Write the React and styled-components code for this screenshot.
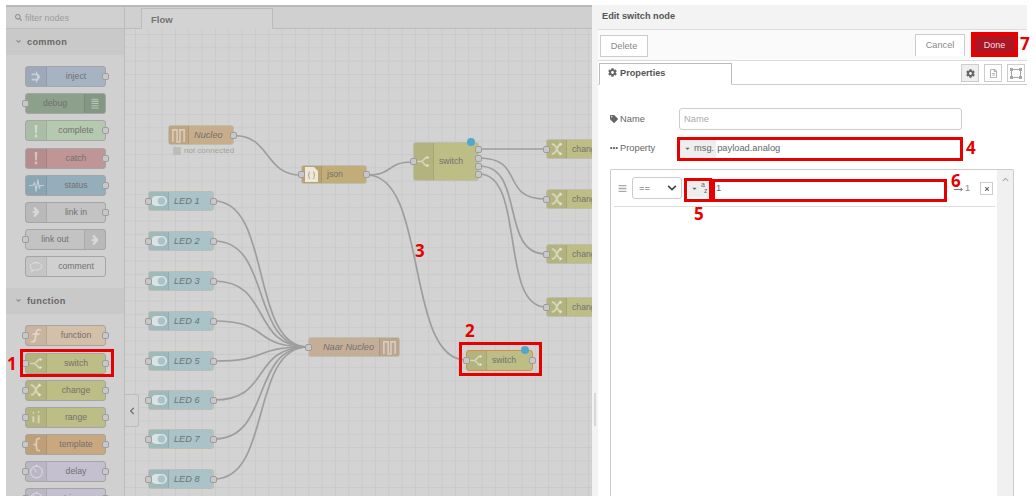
import React from 'react';
import styled, { createGlobalStyle } from 'styled-components';
import { FaCog, FaTag, FaEllipsisH, FaBars, FaSearch, FaCaretDown, FaTimes, FaChevronLeft, FaRegFileAlt, FaChevronUp, FaChevronDown, FaAngleDown } from 'react-icons/fa';

const Global = createGlobalStyle`
  html, body { margin: 0; padding: 0; background: #fff; overflow: hidden; }
  body { font-family: "Liberation Sans", Arial, sans-serif; }
  * { box-sizing: border-box; }
`;

const Page = styled.div`
  position: relative;
  width: 1036px;
  height: 504px;
  background: #fff;
  overflow: hidden;
`;

const Frame = styled.div`
  display: flex;
  margin: 5px 0 0 6px;
  width: 1021px;
  height: 491px;
`;

/* ---------- palette ---------- */
const Palette = styled.aside`
  flex: 0 0 119px;
  background: #d0d0d0;
  border-top: 2px solid #b9b9b9;
  border-right: 1px solid #bcbcbc;
  overflow: hidden;
`;
const Filter = styled.div`
  display: flex;
  align-items: center;
  gap: 3px;
  height: 22px;
  padding-left: 9px;
  color: #9c9c9c;
  font-size: 9px;
  border-bottom: 1px solid #bcbcbc;
  svg { font-size: 7px; color: #8f8f8f; }
`;
const Category = styled.div`
  display: flex;
  align-items: center;
  gap: 5px;
  height: 26px;
  padding-left: 9px;
  padding-bottom: 1px;
  background: #c9c9c9;
  color: #6a6a6a;
  font-size: 9.2px;
  font-weight: bold;
  letter-spacing: .3px;
  svg { font-size: 7px; color: #888; }
`;
const PaletteList = styled.div`
  display: flex;
  flex-direction: column;
  gap: 6.2px;
  padding: 11px 0 11px 19px;
`;
const NodeBox = styled.div`
  position: relative;
  display: flex;
  flex-direction: ${p => (p.$iconRight ? 'row-reverse' : 'row')};
  align-items: stretch;
  width: ${p => p.$w || 81}px;
  height: ${p => p.$h || 21}px;
  background: ${p => p.$color};
  border: 1px solid ${p => p.$border || '#a5a5a5'};
  border-radius: 3px;
  color: #717171;
  font-size: 8.7px;
`;
const IconCell = styled.div`
  flex: 0 0 ${p => p.$w || 20}px;
  display: flex;
  align-items: center;
  justify-content: center;
  background: rgba(0, 0, 0, .05);
  border-${p => (p.$right ? 'left' : 'right')}: 1px solid rgba(0, 0, 0, .08);
  svg { display: block; }
`;
const NodeLabel = styled.div`
  flex: 1;
  display: flex;
  align-items: center;
  justify-content: ${p => p.$align || 'center'};
  white-space: nowrap;
  font-style: ${p => (p.$italic ? 'italic' : 'normal')};
  font-size: ${p => (p.$italic ? 9.2 : 8.7)}px;
  padding: 0 5px 1px;
`;
const Port = styled.span`
  position: absolute;
  width: 7px;
  height: 7px;
  top: ${p => (p.$top != null ? `${p.$top}px` : 'calc(50% - 3.5px)')};
  ${p => (p.$side === 'left' ? 'left: -4px;' : 'right: -4px;')}
  background: #c8c8c8;
  border: 1px solid #9d9d9d;
  border-radius: 2px;
`;

/* ---------- canvas ---------- */
const Workspace = styled.main`
  flex: 0 0 467px;
  display: flex;
  flex-direction: column;
  background: #d3d3d3;
  border-top: 2px solid #b9b9b9;
  overflow: hidden;
`;
const TabBar = styled.div`
  flex: 0 0 22px;
  display: flex;
  align-items: flex-end;
  padding-left: 16px;
  background: #d0d0d0;
  border-bottom: 1px solid #bcbcbc;
`;
const FlowTab = styled.div`
  display: flex;
  align-items: center;
  width: 132px;
  height: 21px;
  margin-bottom: -1px;
  padding-left: 9px;
  background: #d3d3d3;
  border: 1px solid #bcbcbc;
  border-bottom: none;
  color: #757575;
  font-size: 9.5px;
  font-weight: bold;
`;
const Canvas = styled.div`
  position: relative;
  flex: 1;
  overflow: hidden;
  background-color: #d3d3d3;
  background-image:
    linear-gradient(#cacaca 1px, transparent 1px),
    linear-gradient(90deg, #cacaca 1px, transparent 1px);
  background-size: 13.33px 13.33px;
  background-position: 10px 5px;
`;
const Wires = styled.svg`
  position: absolute;
  left: 0;
  top: 0;
  path { fill: none; stroke: #9e9e9e; stroke-width: 1.7; }
`;
const Placed = styled.div`
  position: absolute;
  left: ${p => p.$x - CX}px;
  top: ${p => p.$y - CY}px;
`;
const StatusLine = styled.div`
  display: flex;
  align-items: center;
  gap: 3px;
  margin: 1px 0 0 5px;
  color: #a2a2a2;
  font-size: 8px;
  white-space: nowrap;
`;
const StatusDot = styled.span`
  width: 8px;
  height: 8px;
  background: #bdbdbd;
  border-radius: 1px;
`;
const ChangedDot = styled.span`
  position: absolute;
  right: ${p => p.$r}px;
  top: -5px;
  width: 8px;
  height: 8px;
  border-radius: 50%;
  background: #4fa9cd;
`;
const CollapseTab = styled.div`
  position: absolute;
  left: -1px;
  top: 365px;
  width: 15px;
  height: 33px;
  display: flex;
  align-items: center;
  justify-content: center;
  background: #d2d2d2;
  border: 1px solid #bcbcbc;
  border-left: 1px solid #fff;
  border-radius: 0 3px 3px 0;
  color: #6b6b6b;
  svg { font-size: 8px; }
`;

/* ---------- edit tray ---------- */
const Tray = styled.section`
  flex: 1;
  display: flex;
  flex-direction: column;
  background: #fff;
  border-left: 6px solid #f3f3f3;
  position: relative;
  min-width: 0;
`;
const Sash = styled.span`
  position: absolute;
  left: -4px;
  top: 388px;
  width: 2px;
  height: 33px;
  background: #d8d8d8;
`;
const TrayTitle = styled.div`
  flex: 0 0 25px;
  display: flex;
  align-items: center;
  padding: 0 0 2px 4px;
  background: #f3f3f3;
  border-bottom: 1px solid #ddd;
  color: #555;
  font-size: 9.2px;
  font-weight: bold;
`;
const TrayToolbar = styled.div`
  flex: 0 0 31px;
  display: flex;
  align-items: flex-start;
  justify-content: space-between;
  padding: 4px 13px 0 2px;
  background: #fafafa;
  border-bottom: 1px solid #ddd;
`;
const ToolButton = styled.div`
  display: flex;
  align-items: center;
  justify-content: center;
  width: ${p => p.$w}px;
  height: 22px;
  margin-top: ${p => p.$mt || 0}px;
  padding-bottom: 1px;
  background: #fff;
  border: 1px solid #ccc;
  border-bottom: ${p => (p.$open ? 'none' : '1px solid #ccc')};
  color: #888;
  font-size: 9.2px;
`;
const ToolRight = styled.div`
  display: flex;
  gap: 10px;
`;
const DoneButton = styled.div`
  display: flex;
  align-items: center;
  justify-content: center;
  width: 39px;
  height: 19px;
  margin: 1px 0 0;
  background: #ad1625;
  color: #f2dfe1;
  font-size: 9px;
`;
const TabRow = styled.div`
  flex: 0 0 24px;
  display: flex;
  align-items: flex-end;
  justify-content: space-between;
  padding: 0 2px 0 1px;
  border-bottom: 1px solid #ccc;
`;
const PropTab = styled.div`
  display: flex;
  align-items: center;
  gap: 3px;
  width: 133px;
  height: 22px;
  margin-bottom: -1px;
  padding: 0 0 3px 8px;
  background: #fff;
  border: 1px solid #bbb;
  border-bottom: 1px solid #fff;
  color: #555;
  font-size: 9.2px;
  font-weight: bold;
  svg { font-size: 9px; color: #666; }
`;
const TabIcons = styled.div`
  display: flex;
  gap: 5px;
  margin-bottom: 2px;
`;
const TabIcon = styled.div`
  display: flex;
  align-items: center;
  justify-content: center;
  width: 18px;
  height: 18px;
  background: ${p => (p.$active ? '#efefef' : '#fff')};
  border: 1px solid #ccc;
  color: ${p => (p.$active ? '#666' : '#a5a5a5')};
  svg { font-size: 9px; }
`;
const Form = styled.div`
  flex: 1;
  display: flex;
  flex-direction: column;
  min-height: 0;
  padding: 23px 13px 0 12px;
`;
const FormRow = styled.div`
  display: flex;
  align-items: center;
  height: 22px;
  margin-bottom: ${p => p.$mb || 0}px;
`;
const FieldLabel = styled.label`
  display: flex;
  align-items: center;
  gap: 2px;
  flex: 0 0 69px;
  padding-bottom: 1px;
  color: #666;
  font-size: 9.3px;
  svg { font-size: 8px; color: #666; }
`;
const TextField = styled.input`
  width: 283px;
  height: 22px;
  padding: 0 4px;
  border: 1px solid #ccc;
  border-radius: 3px;
  outline: none;
  font: 9.3px "Liberation Sans", Arial, sans-serif;
  color: #555;
  &::placeholder { color: #aaa; }
`;
const TypedField = styled.div`
  display: flex;
  align-items: center;
  width: 280px;
  height: 19px;
  margin-left: 1px;
  color: #666;
  font-size: 9.3px;
`;
const TypeTag = styled.div`
  display: flex;
  align-items: center;
  gap: 3px;
  align-self: stretch;
  padding: 0 2px 0 4px;
  background: #eee;
  color: #666;
  font-size: 9.3px;
  svg { font-size: 7px; }
`;
const TypedValue = styled.span`
  padding-left: 1px;
`;
const RuleList = styled.div`
  flex: 1;
  display: flex;
  min-height: 0;
  margin-top: 10px;
  border: 1.5px solid #ccc;
  border-bottom: none;
  border-radius: 2px 2px 0 0;
`;
const RuleBody = styled.div`
  flex: 1;
  padding: 0 2px 0 3px;
`;
const RuleRow = styled.div`
  display: flex;
  align-items: center;
  height: 37px;
  padding: 2px 0 2px 4px;
  border-bottom: 1px solid #ddd;
`;
const Handle = styled.span`
  flex: 0 0 14px;
  display: flex;
  color: #aaa;
  svg { font-size: 9px; }
`;
const OpSelect = styled.div`
  display: flex;
  align-items: center;
  justify-content: space-between;
  width: 50px;
  height: 22px;
  padding: 0 4px 0 6px;
  background: #fff;
  border: 1px solid #ccc;
  border-radius: 3px;
  color: #555;
  font-size: 9.3px;
  svg { font-size: 10px; color: #444; }
`;
const AzButton = styled.div`
  display: flex;
  align-items: center;
  gap: 3px;
  width: 21px;
  height: 18px;
  margin-left: 6px;
  padding-left: 3px;
  background: #eee;
  color: #666;
  svg { font-size: 7px; }
`;
const AzLetters = styled.span`
  display: flex;
  flex-direction: column;
  font-size: 7px;
  line-height: 6.500px;
  span:last-child { margin-left: 3px; }
`;
const RuleValue = styled.input`
  width: 229px;
  height: 18px;
  margin-left: 6px;
  padding: 0 0 0 1px;
  border: none;
  outline: none;
  color: #666;
  font: 9.3px "Liberation Sans", Arial, sans-serif;
`;
const OutputTag = styled.div`
  display: flex;
  align-items: center;
  gap: 2px;
  width: 20px;
  margin-left: 10px;
  color: #888;
  font-size: 9.3px;
  svg { margin-top: 3px; flex: none; }
`;
const DeleteRule = styled.div`
  display: flex;
  align-items: center;
  justify-content: center;
  width: 13px;
  height: 13px;
  margin-left: 6px;
  margin-top: 1px;
  border: 1px solid #ccc;
  color: #666;
  svg { font-size: 6px; }
`;
const Scrollbar = styled.div`
  flex: 0 0 16px;
  display: flex;
  justify-content: center;
  padding-top: 6px;
  background: #f0f0f0;
  color: #aaa;
  svg { font-size: 7px; }
`;

/* ---------- annotations ---------- */
const Mark = styled.div`
  position: absolute;
  left: ${p => p.$x}px;
  top: ${p => p.$y}px;
  width: ${p => p.$w}px;
  height: ${p => p.$h}px;
  border: ${p => p.$b || 3}px solid #e60000;
  pointer-events: none;
`;
const Num = styled.div`
  position: absolute;
  left: ${p => p.$x}px;
  top: ${p => p.$y}px;
  color: #e60000;
  font: bold 17px/20px "Open Sans", sans-serif;
`;

/* ---------- icons ---------- */
const W = 'rgba(255,255,255,.45)';
const Glyph = ({ size = 14, children, vb = '0 0 16 16' }) => (
  <svg width={size} height={size} viewBox={vb} fill="none" stroke={W} strokeWidth="1.6" strokeLinecap="round" strokeLinejoin="round">{children}</svg>
);
const icons = {
  wave: <Glyph size={15}><path strokeLinecap="butt" strokeLinejoin="miter" strokeWidth="1.700" d="M2 15V2h4.500v13h3V2H14v13" /></Glyph>,
  switch: <Glyph size={13}><path strokeWidth="2" d="M1 8h5l5-5h2M6 8l5 5h2" /><path fill={W} stroke="none" d="M12 .8 15.500 3 12 5.200zM12 10.800l3.500 2.200-3.500 2.200z" /></Glyph>,
  change: <Glyph size={14}><path d="M3 2.500c5 0 5 11 9 11M3 13.500c5 0 5-11 9-11" strokeWidth="2.200" /><path fill={W} stroke="none" d="M11 0l3.500 2.500L11 5zM11 11l3.500 2.500L11 16z" /></Glyph>,
  inject: <Glyph><path fill={W} stroke="none" d="M3 4h5V1l5 7-5 7v-3H3v-2h6V6H3z" /></Glyph>,
  debug: <Glyph><path strokeLinecap="butt" strokeWidth="1.200" d="M4 2.500h8M4 5h8M4 7.500h8M4 10h8M4 12.500h8" /></Glyph>,
  bang: <Glyph><path fill={W} stroke="none" d="M6.500 1h3l-.5 9.500H7zM6.600 12h2.800v3H6.600z" /></Glyph>,
  status: <Glyph size={15}><path strokeWidth="1.300" d="M0 8h4l2-3 1.500 9L9.500 2l1.500 9 1-3h4" /></Glyph>,
  link: <Glyph><path fill={W} stroke="none" d="M5 2.500h2.500L12 8l-4.500 5.500H5L7 8zM4 7h4v2H4z" /></Glyph>,
  comment: <Glyph><path strokeWidth="1" d="M8 3c3.600 0 6.500 1.900 6.500 4.300S11.600 11.500 8 11.500c-.7 0-1.300 0-1.900-.2L3 13.500l.6-3C2.300 9.700 1.500 8.600 1.500 7.300 1.500 4.900 4.400 3 8 3z" /></Glyph>,
  func: <Glyph size={15}><path strokeWidth="1.800" d="M12 2c-3-1-4 .5-4.300 3L6.500 12c-.4 2.500-1.500 3-3.500 2.500M4.500 6.500h6" /></Glyph>,
  range: <Glyph><path strokeWidth="2.200" strokeLinecap="butt" d="M5 7v7M11 6v9" /><path strokeWidth="2" d="M5 3v.3M11 2v.3" /></Glyph>,
  template: <Glyph size={15}><path strokeWidth="2" d="M11 1.500c-3 0-3 1-3 3v1.500c0 1.500-1 2-2.500 2C7 8 8 8.500 8 10v1.500c0 2 0 3 3 3" /></Glyph>,
  delay: <Glyph size={15}><circle cx="8" cy="8.500" r="6.300" strokeWidth="1.100" /><path strokeWidth="1.100" d="M8 8.500 5 5M8 2.200V1" /></Glyph>,
  toggle: <svg width="16" height="10" viewBox="0 0 16 10"><rect x="0" y="0" width="16" height="10" rx="5" fill="rgba(255,255,255,.6)" /><circle cx="10.500" cy="5" r="3.800" fill="#a9c3c8" /></svg>,
  json: <svg width="13" height="15" viewBox="0 0 13 15"><path fill="rgba(255,255,255,.75)" d="M0 0h9l4 4v11H0z" /><path fill="none" stroke="#b59f6b" strokeWidth="1" d="M5 5c-1.500 0-1 1-1 2s-.2 1-1 1.200c.8.200 1 .5 1 1.300s-.5 2 1 2M8 5c1.500 0 1 1 1 2s.2 1 1 1.200c-.8.200-1 .5-1 1.300s.5 2-1 2" /></svg>,
};

const PN = ({ label, icon, color, left, right, iconRight, border }) => (
  <NodeBox $color={color} $iconRight={iconRight} $border={border}>
    <IconCell $w={21} $right={iconRight}>{icons[icon]}</IconCell>
    <NodeLabel>{label}</NodeLabel>
    {left && <Port $side="left" />}
    {right && <Port $side="right" />}
  </NodeBox>
);

const common = [
  { label: 'inject', icon: 'inject', color: '#a6b3c3', right: 1 },
  { label: 'debug', icon: 'debug', color: '#8ca08c', left: 1, iconRight: 1 },
  { label: 'complete', icon: 'bang', color: '#b4c9ae', right: 1 },
  { label: 'catch', icon: 'bang', color: '#bf9595', right: 1 },
  { label: 'status', icon: 'status', color: '#94aebc', right: 1 },
  { label: 'link in', icon: 'link', color: '#c3c3c3', right: 1 },
  { label: 'link out', icon: 'link', color: '#c3c3c3', left: 1, iconRight: 1 },
  { label: 'comment', icon: 'comment', color: '#d0d0d0' },
];
const fn = [
  { label: 'function', icon: 'func', color: '#d4bfa8', left: 1, right: 1 },
  { label: 'switch', icon: 'switch', color: '#bdbd86', left: 1, right: 1 },
  { label: 'change', icon: 'change', color: '#bdbd86', left: 1, right: 1 },
  { label: 'range', icon: 'range', color: '#bdbd86', left: 1, right: 1 },
  { label: 'template', icon: 'template', color: '#c9a87f', left: 1, right: 1 },
  { label: 'delay', icon: 'delay', color: '#c4c0cf', left: 1, right: 1 },
  { label: 'trigger', icon: 'delay', color: '#c4c0cf', left: 1, right: 1 },
];

/* canvas origin in page coordinates */
const CX = 125;
const CY = 29;
const wire = (x1, y1, x2, y2, k = 0.5) => {
  const dx = Math.max(Math.abs(x2 - x1) * k, 20);
  const a = [x1 - CX, y1 - CY];
  const b = [x2 - CX, y2 - CY];
  return `M${a[0]} ${a[1]}C${a[0] + dx} ${a[1]} ${b[0] - dx} ${b[1]} ${b[0]} ${b[1]}`;
};

const ledY = [191, 231, 271, 311, 351, 390, 429, 469];
const chY = [139, 189, 244, 297];
const wires = [
  wire(234, 135.5, 301, 175, 0.55),
  wire(367, 175, 413, 162, 0.6),
  wire(367, 175, 466, 360, 0.62),
  ...[149, 158, 166, 174].map((y, i) => wire(479, y, 546, chY[i] + 10, 0.7)),
  ...ledY.map(y => wire(214, y + 10, 308, 347, 0.62)),
];

const Flow = ({ x, y, w = 66, h = 20, color, icon, label, italic, iconRight, left, right, ports, border, dot, children }) => (
  <Placed $x={x} $y={y}>
    <NodeBox $w={w} $h={h} $color={color} $iconRight={iconRight} $border={border || '#bdbdb0'}>
      <IconCell $right={iconRight}>{icons[icon]}</IconCell>
      <NodeLabel $italic={italic} $align={iconRight ? 'flex-end' : 'flex-start'}>{label}</NodeLabel>
      {left && <Port $side="left" />}
      {right && <Port $side="right" />}
      {ports && ports.map(t => <Port key={t} $side="right" $top={t} />)}
      {dot != null && <ChangedDot $r={dot} />}
    </NodeBox>
    {children}
  </Placed>
);

const FrameIcon = () => (
  <svg width="12" height="11" viewBox="0 0 12 11" fill="none" stroke="#a5a5a5" strokeWidth="1">
    <rect x="1.500" y="1.500" width="9" height="8" />
    <rect x="0" y="0" width="3" height="3" fill="#a5a5a5" stroke="none" />
    <rect x="9" y="0" width="3" height="3" fill="#a5a5a5" stroke="none" />
    <rect x="0" y="8" width="3" height="3" fill="#a5a5a5" stroke="none" />
    <rect x="9" y="8" width="3" height="3" fill="#a5a5a5" stroke="none" />
  </svg>
);

export default function App() {
  return (
    <Page>
      <Global />
      <Frame>
        <Palette>
          <Filter><FaSearch /> filter nodes</Filter>
          <Category><FaAngleDown /> common</Category>
          <PaletteList>{common.map(n => <PN key={n.label} {...n} />)}</PaletteList>
          <Category><FaAngleDown /> function</Category>
          <PaletteList>{fn.map(n => <PN key={n.label} {...n} />)}</PaletteList>
        </Palette>

        <Workspace>
          <TabBar><FlowTab>Flow</FlowTab></TabBar>
          <Canvas>
            <Wires width="467" height="470">{wires.map((d, i) => <path key={i} d={d} />)}</Wires>
            <CollapseTab><FaChevronLeft /></CollapseTab>

            <Flow x={168} y={125} color="#c8ad8b" icon="wave" label="Nucleo" italic right>
              <StatusLine><StatusDot /> not connected</StatusLine>
            </Flow>
            {ledY.map((y, i) => (
              <Flow key={y} x={148} y={y} color="#a9c3c8" icon="toggle" label={`LED ${i + 1}`} italic left right />
            ))}
            <Flow x={301} y={165} h={19} color="#c2ad78" icon="json" label="json" left right />
            <Flow x={413} y={142} h={39} color="#bdbd86" icon="switch" label="switch" left ports={[3, 12, 20, 28]} dot={3} />
            {chY.map(y => <Flow key={y} x={546} y={y} color="#bdbd86" icon="change" label="change" left />)}
            <Flow x={308} y={337} w={92} color="#c4ae97" icon="wave" label="Naar Nucleo" italic iconRight left />
            <Flow x={466} y={350} w={67} h={21} color="#bdbd86" icon="switch" label="switch" left right border="#e08a3c" dot={3} />
          </Canvas>
        </Workspace>

        <Tray>
          <Sash />
          <TrayTitle>Edit switch node</TrayTitle>
          <TrayToolbar>
            <ToolButton $w={48} $mt={1}>Delete</ToolButton>
            <ToolRight>
              <ToolButton $w={50} $open>Cancel</ToolButton>
              <DoneButton>Done</DoneButton>
            </ToolRight>
          </TrayToolbar>
          <TabRow>
            <PropTab><FaCog /> Properties</PropTab>
            <TabIcons>
              <TabIcon $active><FaCog /></TabIcon>
              <TabIcon><FaRegFileAlt /></TabIcon>
              <TabIcon><FrameIcon /></TabIcon>
            </TabIcons>
          </TabRow>
          <Form>
            <FormRow $mb={7}>
              <FieldLabel><FaTag /> Name</FieldLabel>
              <TextField placeholder="Name" />
            </FormRow>
            <FormRow>
              <FieldLabel><FaEllipsisH /> Property</FieldLabel>
              <TypedField>
                <TypeTag><FaCaretDown /> msg.</TypeTag>
                <TypedValue>payload.analog</TypedValue>
              </TypedField>
            </FormRow>
            <RuleList>
              <RuleBody>
                <RuleRow>
                  <Handle><FaBars /></Handle>
                  <OpSelect>== <FaChevronDown /></OpSelect>
                  <AzButton><FaCaretDown /><AzLetters><span>a</span><span>z</span></AzLetters></AzButton>
                  <RuleValue defaultValue="1" />
                  <OutputTag>
                    <svg width="9" height="5" viewBox="0 0 9 5" fill="none" stroke="#777" strokeWidth="1"><path d="M0 2.500h8M6.500 1 8.500 2.500 6.500 4" /></svg>
                    1
                  </OutputTag>
                  <DeleteRule><FaTimes /></DeleteRule>
                </RuleRow>
              </RuleBody>
              <Scrollbar><FaChevronUp /></Scrollbar>
            </RuleList>
          </Form>
        </Tray>
      </Frame>

      <Mark $x={20} $y={349} $w={94} $h={28} />
      <Mark $x={459} $y={342} $w={83} $h={34} />
      <Mark $x={677} $y={137} $w={286} $h={24} />
      <Mark $x={684} $y={178} $w={28} $h={24} />
      <Mark $x={712} $y={179} $w={235} $h={23} />
      <Mark $x={971} $y={32} $w={47} $h={25} $b={4} />
      <Num $x={7} $y={354}>1</Num>
      <Num $x={465} $y={321}>2</Num>
      <Num $x={415} $y={241}>3</Num>
      <Num $x={966} $y={138}>4</Num>
      <Num $x={694} $y={204}>5</Num>
      <Num $x={951} $y={171}>6</Num>
      <Num $x={1020} $y={34}>7</Num>
    </Page>
  );
}
